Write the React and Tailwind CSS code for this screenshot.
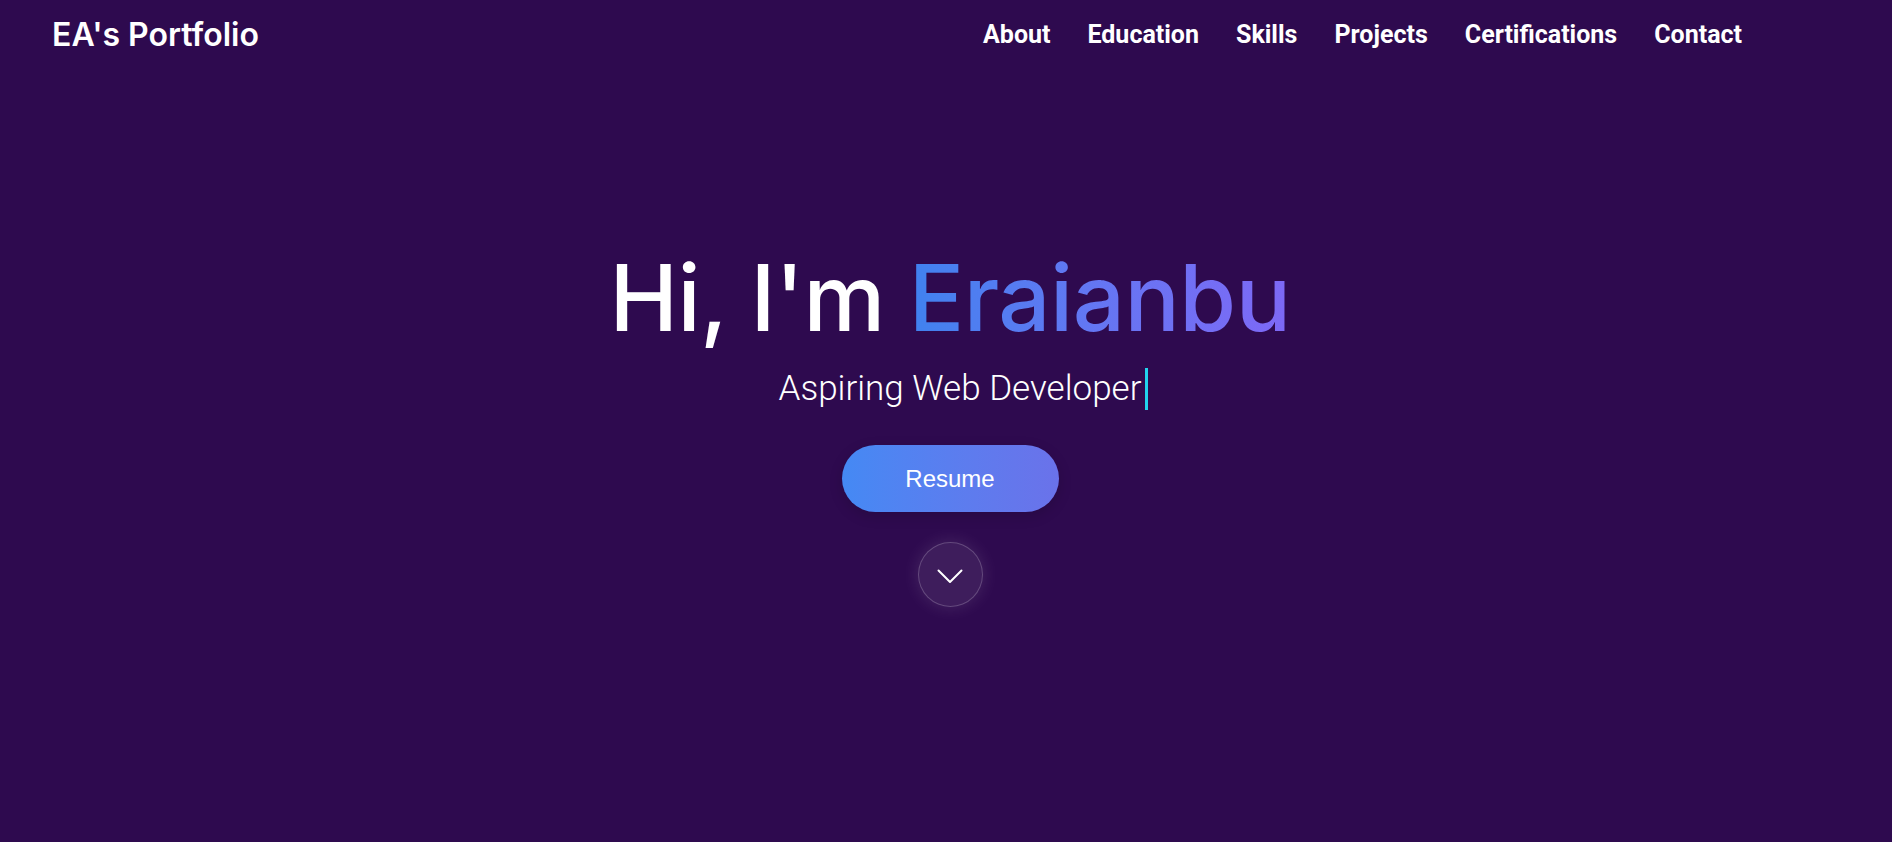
import { useEffect, useState } from 'react';

const links = ['About', 'Education', 'Skills', 'Projects', 'Certifications', 'Contact'];

export default function App() {
  const [blink, setBlink] = useState(true);

  useEffect(() => {
    const id = setInterval(() => setBlink((b) => !b), 600);
    return () => clearInterval(id);
  }, []);

  return (
    <div className="min-h-screen w-full bg-[#2e0a4f] text-white overflow-hidden">
      {/* Navbar */}
      <header className="flex items-center justify-between h-[69px] pl-[52px] pr-[150px]">
        <a href="#" className="text-[32px] font-semibold leading-none font-['Inter',sans-serif]">
          EA's Portfolio
        </a>
        <nav className="flex items-center gap-[37px]">
          {links.map((l) => (
            <a
              key={l}
              href={`#${l.toLowerCase()}`}
              className="text-[25px] font-bold leading-none font-['Roboto',sans-serif] hover:text-purple-300"
            >
              {l}
            </a>
          ))}
        </nav>
      </header>

      {/* Hero */}
      <main className="flex flex-col items-center pt-[183px] pl-[8px]">
        <h1 className="text-[92px] font-medium leading-none tracking-[-0.5px] font-['Inter',sans-serif]">
          Hi, I'm{' '}
          <span className="bg-gradient-to-r from-[#3f82ef] to-[#7e68f6] bg-clip-text text-transparent">
            Eraianbu
          </span>
        </h1>

        <p className="mt-[21px] ml-[27px] flex items-center text-[35px] font-light leading-[48px] font-['Roboto',sans-serif]">
          Aspiring Web Developer
          <span className={`ml-[4px] inline-block w-[3px] h-[42px] bg-[#22d3ee] ${blink ? 'opacity-100' : 'opacity-100'}`} />
        </p>

        <button className="mt-[32px] w-[217px] h-[67px] rounded-full bg-gradient-to-r from-[#4489f4] to-[#6a72ea] text-[24px] font-['Liberation_Sans',Arial,sans-serif] text-white shadow-[0_4px_14px_rgba(0,0,0,0.15)]">
          Resume
        </button>

        <a
          href="#about"
          className="mt-[30px] flex items-center justify-center w-[65px] h-[65px] rounded-full bg-white/[0.08] border border-white/20 shadow-[0_0_18px_rgba(255,255,255,0.12)]"
        >
          <svg className="mt-[3px]" width="26" height="15" viewBox="0 0 26 15" fill="none">
            <polyline points="1.5,1.5 13,13 24.5,1.5" stroke="white" strokeWidth="2" strokeLinecap="round" strokeLinejoin="round" />
          </svg>
        </a>
      </main>
    </div>
  );
}
